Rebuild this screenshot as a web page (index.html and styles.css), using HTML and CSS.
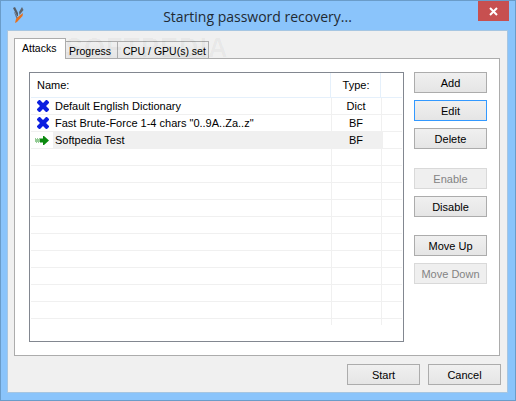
FILE: index.html
```html
<!DOCTYPE html>
<html>
<head>
<meta charset="utf-8">
<title>Starting password recovery...</title>
<link rel="stylesheet" href="styles.css">
</head>
<body>
<div class="window">
  <header class="titlebar">
    <div class="title-left">
      <svg class="logo" width="11" height="16" viewBox="0 0 11 16">
        <path d="M0 1 L2 0 L5 6 L5 9 L4 9 Z" fill="#555c66"/>
        <path d="M1 5 L2 5.5 L5 11 L4 13 Z" fill="#6e7480"/>
        <path d="M9 0 L10.5 3 L6.5 8 L6 5 Z" fill="#5f6670"/>
        <path d="M10 6 L9.5 9 L4 15 L2 16 L3 12 L6 9 Z" fill="#e8701c"/>
      </svg>
    </div>
    <h1 class="title">Starting password recovery...</h1>
    <div class="title-right">
      <div class="close">
        <svg width="9" height="9" viewBox="0 0 9 9"><path d="M1 1 L8 8 M8 1 L1 8" stroke="#fff" stroke-width="2"/></svg>
      </div>
    </div>
  </header>
  <main class="dialog">
    <nav class="tabs">
      <div class="tab active">Attacks</div>
      <div class="tab">Progress</div>
      <div class="tab">CPU / GPU(s) set</div>
    </nav>
    <section class="page">
      <div class="list">
        <div class="row head"><span class="c-name">Name:</span><span class="c-type">Type:</span><span class="c-rest"></span></div>
        <div class="row"><span class="c-name"><svg class="ico" width="12" height="12" viewBox="0 0 12 12"><path d="M0 2 L2 0 L3 0 L6 3 L9 0 L10 0 L12 2 L12 3 L9 6 L12 9 L12 10 L10 12 L9 12 L6 9 L3 12 L2 12 L0 10 L0 9 L3 6 L0 3 Z" fill="#0b1fe0"/></svg>Default English Dictionary</span><span class="c-type">Dict</span><span class="c-rest"></span></div>
        <div class="row"><span class="c-name"><svg class="ico" width="12" height="12" viewBox="0 0 12 12"><path d="M0 2 L2 0 L3 0 L6 3 L9 0 L10 0 L12 2 L12 3 L9 6 L12 9 L12 10 L10 12 L9 12 L6 9 L3 12 L2 12 L0 10 L0 9 L3 6 L0 3 Z" fill="#0b1fe0"/></svg>Fast Brute-Force 1-4 chars "0..9A..Za..z"</span><span class="c-type">BF</span><span class="c-rest"></span></div>
        <div class="row selected"><span class="c-name"><svg class="ico arrow" width="14" height="9" viewBox="0 0 14 9"><path d="M8 0 L9 0 L14 4.5 L9 9 L8 9 L8 6.5 L5 6.5 L5 2.5 L8 2.5 Z" fill="#0c8a10"/><path d="M0 2.5 H1 V3.5 H0 Z M2 2.5 H3 V3.5 H2 Z M4 2.5 H5 V3.5 H4 Z M1 3.5 H2 V4.5 H1 Z M3 3.5 H4 V4.5 H3 Z M0 4.5 H1 V5.5 H0 Z M2 4.5 H3 V5.5 H2 Z M4 4.5 H5 V5.5 H4 Z M1 5.5 H2 V6.5 H1 Z M3 5.5 H4 V6.5 H3 Z" fill="#2f9a30"/></svg>Softpedia Test</span><span class="c-type">BF</span><span class="c-rest"></span></div>
        <div class="row"></div><div class="row"></div><div class="row"></div><div class="row"></div><div class="row"></div>
        <div class="row"></div><div class="row"></div><div class="row"></div><div class="row"></div><div class="row"></div>
        <div class="row last"></div>
      </div>
      <aside class="actions">
        <button class="btn">Add</button>
        <button class="btn focus">Edit</button>
        <button class="btn">Delete</button>
        <button class="btn off group">Enable</button>
        <button class="btn">Disable</button>
        <button class="btn group2">Move Up</button>
        <button class="btn off">Move Down</button>
      </aside>
    </section>
    <footer class="footer">
      <button class="btn">Start</button>
      <button class="btn">Cancel</button>
    </footer>
    <div class="watermark">SOFTPEDIA</div>
  </main>
</div>
</body>
</html>
```
FILE: styles.css
```css
* { box-sizing: border-box; }
html, body { margin: 0; padding: 0; }
body { width: 516px; height: 401px; overflow: hidden; font-family: "Liberation Sans", sans-serif; font-size: 11px; color: #000; }
.window { width: 516px; height: 401px; background: #8ac4fb; border: 1px solid #6a9cc9; display: flex; flex-direction: column; padding: 0 7px 7px 6px; }
.titlebar { height: 29px; display: grid; grid-template-columns: 1fr auto 1fr; flex: none; }
.title-left { padding: 6px 0 0 6px; }
.logo { display: block; }
.title { margin: 0; font: 400 14px/32px "Open Sans", sans-serif; color: #1f2a33; }
.title-right { display: flex; justify-content: flex-end; }
.close { width: 31px; height: 20px; margin-right: -1px; background: #c75050; display: flex; align-items: center; justify-content: center; }
.dialog { position: relative; flex: 1; background: #f0f0f0; border: 1px solid #a6c6e2; padding: 7px 6px 7px 6px; display: flex; flex-direction: column; }
.watermark { position: absolute; left: 57px; top: 2px; font: 700 27px/30px "Liberation Sans", sans-serif; letter-spacing: 1px; color: rgba(0, 0, 0, 0.04); pointer-events: none; }
.tabs { position: relative; display: flex; height: 21px; align-items: flex-end; margin-bottom: -1px; }
.tab { height: 18px; padding: 2px 0 0 3px; border: 1px solid #acacac; margin-left: -1px; background: linear-gradient(#f0f0f0, #e5e5e5); line-height: 14px; white-space: nowrap; font-size: 10.5px; }
.tab:nth-child(2) { width: 53px; }
.tab:nth-child(3) { width: 92px; padding-left: 5px; }
.tab.active { position: relative; z-index: 1; height: 21px; width: 52px; margin-left: 0; background: #fff; border-bottom: 0; padding: 2px 0 0 7px; }
.page { position: relative; background: #fff; border: 1px solid #acacac; height: 298px; margin-right: 1px; padding: 13px 12px 0 14px; display: flex; justify-content: space-between; align-items: flex-start; }
.list { width: 375px; height: 270px; border: 1px solid #828790; background: #fff; padding: 0 0 0 1px; overflow: hidden; }
.row { display: grid; grid-template-columns: 302px 50px 1fr; height: 17px; border-bottom: 1px solid #f0f0f0; width: 371px; position: relative; }
.row::before, .row::after { content: ""; position: absolute; top: 0; bottom: -1px; width: 1px; background: #f0f0f0; }
.row::before { left: 300px; }
.row::after { left: 350px; }
.row span { line-height: 16px; }
.head { height: 25px; border-bottom: 1px solid #e5f0fb; }
.head::before, .head::after { background: #e5f0fb; left: 299px; }
.head::after { left: 349px; }
.head span { line-height: 24px; }
.head .c-name { padding-left: 6px; }
.c-name { padding-left: 24px; position: relative; white-space: nowrap; }
.c-type { text-align: center; padding-right: 4px; }
.ico { position: absolute; left: 6px; top: 2px; }
.arrow { left: 4px; top: 4px; }
.selected .c-name { background: linear-gradient(90deg, #fff 22px, #f0f0f0 22px); }
.selected .c-type { background: #f0f0f0; }
.last { border-bottom: 0; height: 5px; }
.actions { display: flex; flex-direction: column; gap: 7px; width: 73px; }
.btn { display: block; width: 73px; height: 21px; padding: 0; border: 1px solid #acacac; background: linear-gradient(#f0f0f0, #e5e5e5); font: inherit; color: #000; }
.focus { border-color: #3399ff; }
.off { background: #efefef; border-color: #d9d9d9; color: #838383; }
.group { margin-top: 12px; }
.group2 { margin-top: 11px; }
.footer { display: flex; justify-content: flex-end; gap: 8px; padding: 8px 0 0; }
```
